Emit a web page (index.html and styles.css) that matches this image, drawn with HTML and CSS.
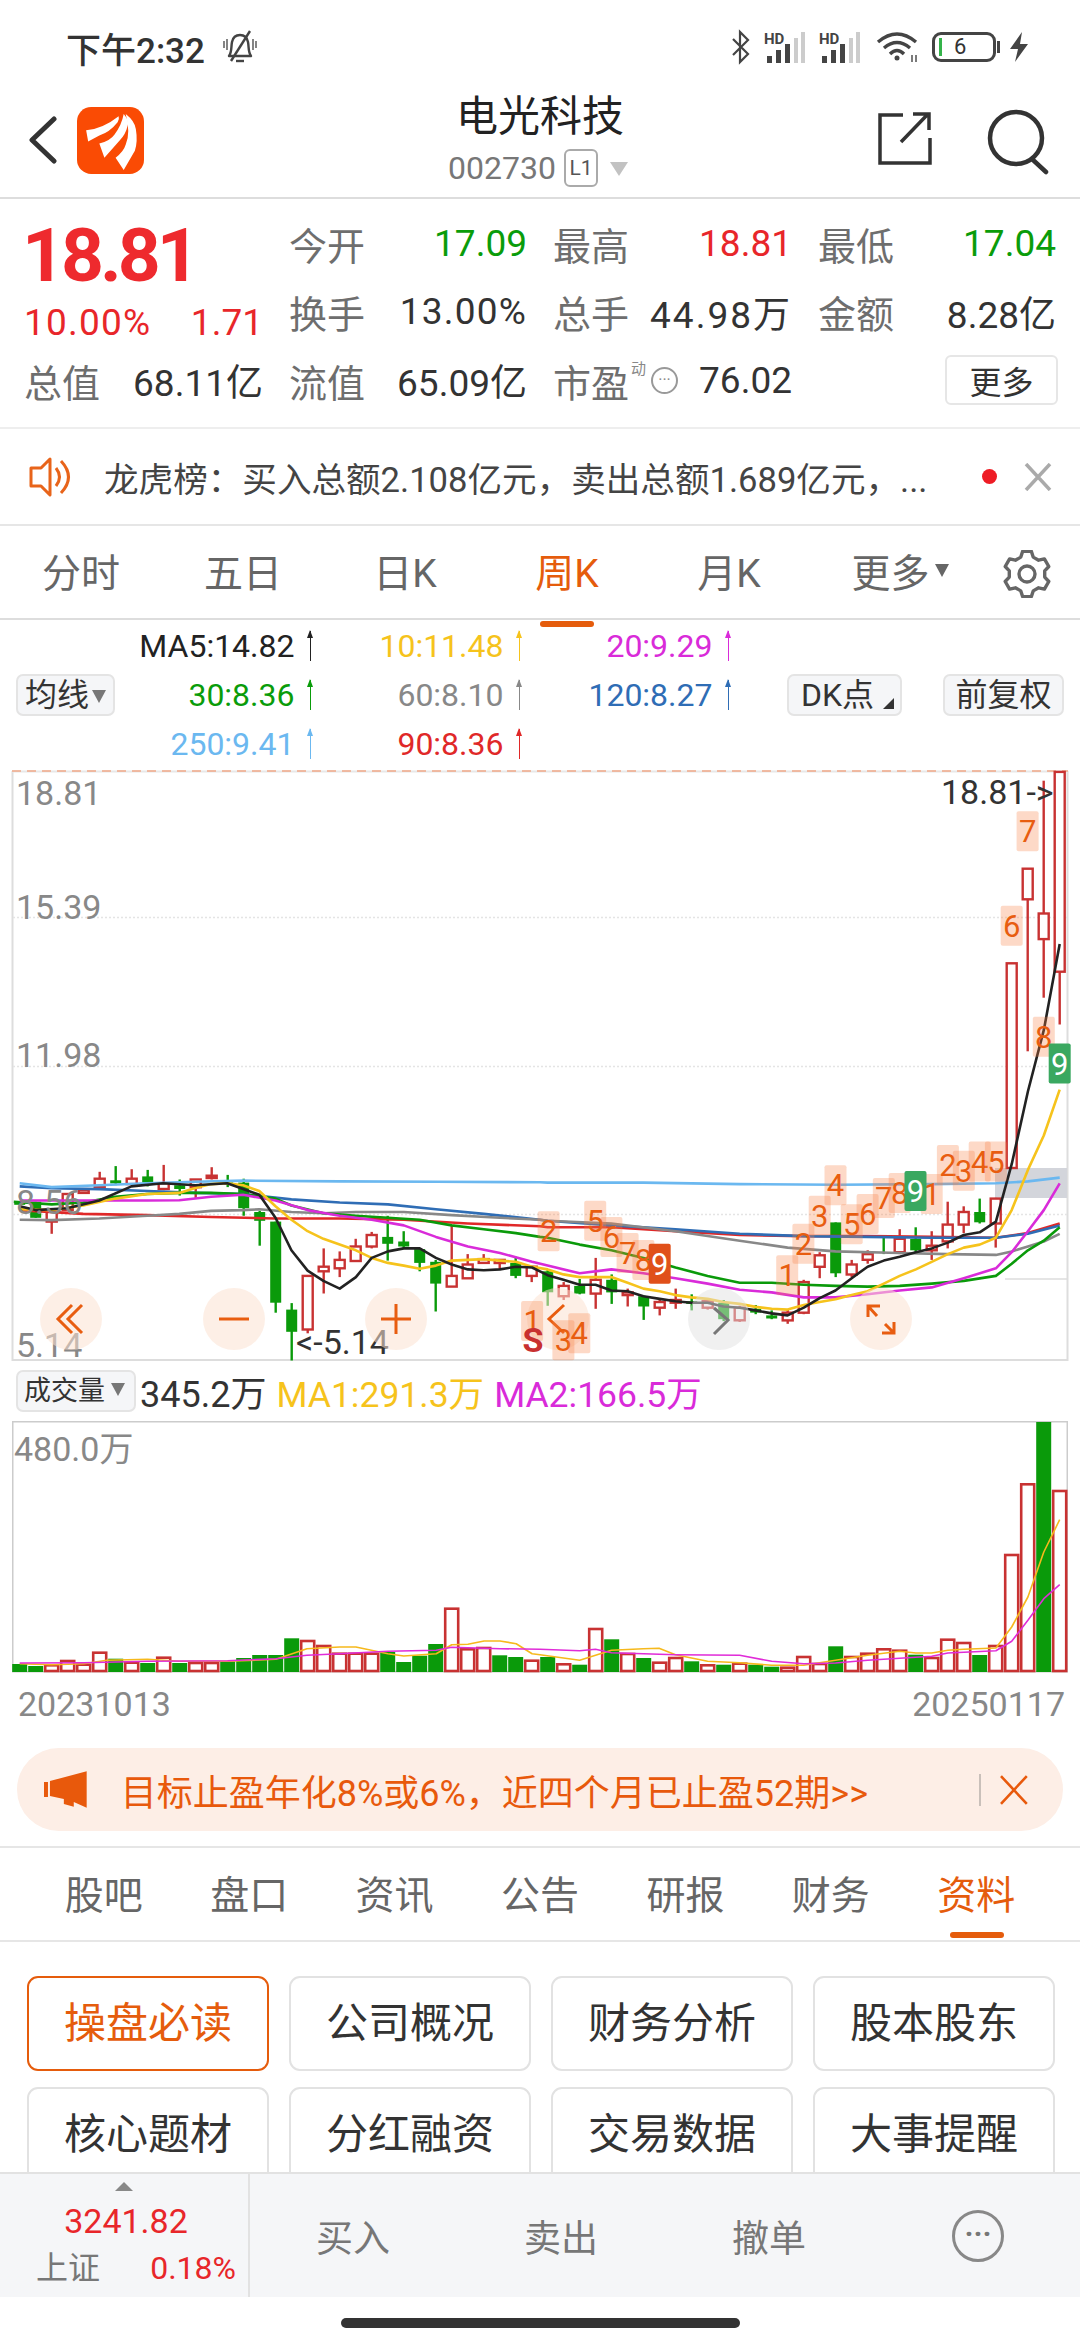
FILE: index.html
```html
<!DOCTYPE html>
<html lang="en">

<head>
  <meta charset="UTF-8">
  <meta name="viewport" content="width=device-width, initial-scale=1.0">
  <title>电光科技</title>
  <link rel="stylesheet" href="styles.css">
</head>

<body>

  <!-- Status bar -->
  <div class="status-bar">
    <div class="status-left">
      <span>下午2:32</span>
      <svg class="bell" width="36" height="34" viewBox="0 0 36 34" fill="none" stroke="#444" stroke-width="2.4">
        <path d="M7 26 C10 22 9 17 10 12 C11 7 14 5 18 5 C22 5 25 7 26 12 C27 17 26 22 29 26 Z" stroke-linejoin="round" />
        <path d="M14 31 H22" />
        <path d="M28 1 L9 31" />
        <path d="M2 11 V18 M5 9 V20 M31 9 V20 M34 11 V18" stroke-width="1.3" />
      </svg>
    </div>
    <div class="status-right">
      <svg width="20" height="36" viewBox="0 0 20 36" fill="none" stroke="#444" stroke-width="2.2">
        <path d="M2 10 L17 25 L9 33 V3 L17 11 L2 26" />
      </svg>
      <svg class="signal" width="42" height="32" viewBox="0 0 42 32">
        <text x="0" y="13" class="hd">HD</text>
        <rect x="3" y="25" width="5" height="7" fill="#444" />
        <rect x="12" y="19" width="5" height="13" fill="#444" />
        <rect x="21" y="13" width="5" height="19" fill="#444" />
        <rect x="30" y="7" width="4" height="25" fill="#ccc" />
        <rect x="37" y="1" width="4" height="31" fill="#ccc" />
      </svg>
      <svg class="signal" width="42" height="32" viewBox="0 0 42 32">
        <text x="0" y="13" class="hd">HD</text>
        <rect x="3" y="25" width="5" height="7" fill="#444" />
        <rect x="12" y="19" width="5" height="13" fill="#444" />
        <rect x="21" y="13" width="5" height="19" fill="#444" />
        <rect x="30" y="7" width="4" height="25" fill="#ccc" />
        <rect x="37" y="1" width="4" height="31" fill="#ccc" />
      </svg>
      <svg class="wifi" width="44" height="32" viewBox="0 0 44 32" fill="none" stroke="#444" stroke-width="3.4">
        <path d="M2 11 Q21 -5 40 11" />
        <path d="M8 17 Q21 6 34 17" />
        <path d="M14 23 Q21 16 28 23" />
        <circle cx="21" cy="27" r="2.5" fill="#444" stroke="none" />
        <path d="M36 24 V31 M40 24 V31" stroke-width="1.4" />
      </svg>
      <div class="battery">
        <span class="battery-level"></span>
        <span class="battery-num">6</span>
      </div>
      <svg class="bolt" width="22" height="32" viewBox="0 0 22 32">
        <path d="M14 1 L2 18 H10 L7 31 L20 13 H12 Z" fill="#444" />
      </svg>
    </div>
  </div>

  <!-- Title -->
  <div class="header">
    <div class="header-left">
      <svg width="30" height="48" viewBox="0 0 30 48" fill="none" stroke="#333" stroke-width="5" stroke-linecap="round" stroke-linejoin="round">
        <path d="M26 3 L4 24 L26 45" />
      </svg>
      <svg class="logo" width="67" height="67" viewBox="0 0 66 66">
        <rect width="66" height="66" rx="14" fill="#fa4b04" />
        <path d="M9 23 Q26 21 41 9 Q42 12 40 15 Q32 25 22 28 L11 34 Z" fill="#fff" />
        <path d="M46 7 Q52 14 50 18 Q48 27 42 33 L27 50 L22 36 Q33 33 37 27 Q44 18 46 7 Z" fill="#fff" />
        <path d="M48 7 Q57 14 58 22 Q60 34 57 43 L46 62 L38 50 Q46 44 48 37 Q53 26 48 7 Z" fill="#fff" />
      </svg>
    </div>
    <div class="header-center">
      <div class="stock-name">电光科技</div>
      <div class="stock-code">
        <span>002730</span>
        <span class="l1">L1</span>
        <span class="code-arrow"></span>
      </div>
    </div>
    <div class="header-right">
      <svg width="54" height="54" viewBox="0 0 54 54" fill="none" stroke="#333" stroke-width="3.5">
        <path d="M25 4 H2 V52 H52 V27" />
        <path d="M23 31 L50 3 M35 3 H51 V19" />
      </svg>
      <svg width="66" height="66" viewBox="0 0 66 66" fill="none" stroke="#333" stroke-width="4.5" stroke-linecap="round">
        <circle cx="30" cy="29" r="26" />
        <path d="M46 50 L60 63" />
      </svg>
    </div>
  </div>

  <!-- Quote -->
  <div class="quote">
    <div class="quote-main">
      <div class="last-price">18.81</div>
      <div class="change-row">
        <span class="pct">10.00%</span>
        <span>1.71</span>
      </div>
      <div class="quote-cell">
        <span class="q-label">总值</span>
        <span>68.11亿</span>
      </div>
    </div>
    <div class="quote-grid">
      <div class="quote-cell"><span class="q-label">今开</span><span class="green">17.09</span></div>
      <div class="quote-cell"><span class="q-label">最高</span><span class="red">18.81</span></div>
      <div class="quote-cell"><span class="q-label">最低</span><span class="green">17.04</span></div>
      <div class="quote-cell"><span class="q-label">换手</span><span class="pct">13.00%</span></div>
      <div class="quote-cell"><span class="q-label">总手</span><span class="wide">44.98万</span></div>
      <div class="quote-cell"><span class="q-label">金额</span><span>8.28亿</span></div>
      <div class="quote-cell"><span class="q-label">流值</span><span>65.09亿</span></div>
      <div class="quote-cell">
        <span class="pe-label">
          <span class="q-label">市盈</span>
          <span class="pe-sup">动</span>
          <span class="pe-dots">···</span>
        </span>
        <span>76.02</span>
      </div>
      <div class="quote-cell quote-more"><button class="more-btn">更多</button></div>
    </div>
  </div>

  <!-- Notice -->
  <div class="notice">
    <svg width="46" height="40" viewBox="0 0 46 40" fill="none" stroke="#e8641a" stroke-width="3" stroke-linejoin="round">
      <path d="M13 11 H3 V29 H13 L22 38 V2 Z" />
      <path d="M28 11 Q35 20 28 29" />
      <path d="M33 4 Q48 20 33 36" />
    </svg>
    <span class="notice-text">龙虎榜：买入总额2.108亿元，卖出总额1.689亿元，...</span>
    <span class="notice-dot"></span>
    <svg width="28" height="28" viewBox="0 0 28 28" stroke="#aaa" stroke-width="3.5">
      <path d="M2 1 L26 27 M26 1 L2 27" />
    </svg>
  </div>

  <!-- Period tabs -->
  <div class="period-tabs">
    <span class="period">分时</span>
    <span class="period">五日</span>
    <span class="period">日K</span>
    <span class="period active">周K</span>
    <span class="period">月K</span>
    <span class="period period-more">更多<span class="mini-down"></span></span>
    <svg class="gear" width="48" height="48" viewBox="0 0 48 48" fill="none" stroke="#666" stroke-width="3.4" stroke-linejoin="round">
      <path d="M17.8 7.1 L19.6 1.4 L28.4 1.4 L30.2 7.1 L35.6 10.2 L41.4 8.9 L45.8 16.5 L41.7 20.9 L41.7 27.1 L45.8 31.5 L41.4 39.1 L35.6 37.8 L30.2 40.9 L28.4 46.6 L19.6 46.6 L17.8 40.9 L12.4 37.8 L6.6 39.1 L2.2 31.5 L6.3 27.1 L6.3 20.9 L2.2 16.5 L6.6 8.9 L12.4 10.2 Z" />
      <circle cx="24" cy="24" r="8" />
    </svg>
  </div>

  <!-- MA legend -->
  <div class="legend-bar">
    <button class="chip chip-ma">均线<span class="mini-down dark"></span></button>
    <div class="legend">
      <span class="ma c-black">MA5:14.82<i class="up"></i></span>
      <span class="ma c-yellow">10:11.48<i class="up"></i></span>
      <span class="ma c-magenta">20:9.29<i class="up"></i></span>
      <span class="ma c-green">30:8.36<i class="up"></i></span>
      <span class="ma c-gray">60:8.10<i class="up"></i></span>
      <span class="ma c-blue">120:8.27<i class="up"></i></span>
      <span class="ma c-sky">250:9.41<i class="up"></i></span>
      <span class="ma c-red">90:8.36<i class="up"></i></span>
    </div>
    <button class="chip chip-dk">DK点<span class="corner"></span></button>
    <button class="chip chip-fq">前复权</button>
  </div>

  <!-- Candles, filled by chart.js -->
  <svg id="kline" class="kline" width="1080" height="598" viewBox="0 0 1080 598"></svg>

  <!-- Volume -->
  <div class="vol-bar">
    <button class="chip chip-vol">成交量<span class="mini-down dark"></span></button>
    <span class="vol-now">345.2万</span>
    <span class="vol-ma c-yellow">MA1:291.3万</span>
    <span class="vol-ma c-magenta">MA2:166.5万</span>
  </div>
  <svg id="volume" class="volume" width="1080" height="254" viewBox="0 0 1080 254"></svg>
  <div class="dates">
    <span>20231013</span>
    <span>20250117</span>
  </div>

  <!-- Banner -->
  <div class="banner-wrap">
    <div class="banner">
      <svg width="44" height="38" viewBox="0 0 44 38">
        <path d="M0 11 H4 V26 H0 Z M6 10 L43 0 V37 L30 31 L30 36 L20 33 L20 28 L6 25 Z" fill="#e8590c" />
      </svg>
      <span class="banner-text">目标止盈年化8%或6%，近四个月已止盈52期&gt;&gt;</span>
      <span class="banner-line"></span>
      <svg width="30" height="30" viewBox="0 0 30 30" stroke="#e8590c" stroke-width="2.6">
        <path d="M2 1 L28 29 M28 1 L2 29" />
      </svg>
    </div>
  </div>

  <!-- Info tabs -->
  <div class="info-tabs">
    <span class="info-tab">股吧</span>
    <span class="info-tab">盘口</span>
    <span class="info-tab">资讯</span>
    <span class="info-tab">公告</span>
    <span class="info-tab">研报</span>
    <span class="info-tab">财务</span>
    <span class="info-tab active">资料</span>
  </div>

  <div class="info-grid">
    <span class="info-btn active">操盘必读</span>
    <span class="info-btn">公司概况</span>
    <span class="info-btn">财务分析</span>
    <span class="info-btn">股本股东</span>
    <span class="info-btn">核心题材</span>
    <span class="info-btn">分红融资</span>
    <span class="info-btn">交易数据</span>
    <span class="info-btn">大事提醒</span>
  </div>

  <!-- Bottom bar -->
  <div class="bottom-bar">
    <div class="index-box">
      <span class="up-tri"></span>
      <div class="index-value">3241.82</div>
      <div class="index-row">
        <span class="index-name">上证</span>
        <span class="index-pct">0.18%</span>
      </div>
    </div>
    <div class="trade-actions">
      <span class="trade">买入</span>
      <span class="trade">卖出</span>
      <span class="trade">撤单</span>
      <span class="trade-more">···</span>
    </div>
  </div>

  <div class="home-area"><span class="home-pill"></span></div>

  <script src="chart.js"></script>

</body>

</html>
```

FILE: styles.css
```css
* {
  box-sizing: border-box;
}

body {
  margin: 0;
  width: 1080px;
  height: 2340px;
  overflow: hidden;
  background-color: #fff;
  color: #333;
  font-family: Roboto, "Noto Sans CJK SC", sans-serif;
}

button {
  font-family: inherit;
  padding: 0;
}

/* Status bar */
.status-bar {
  height: 94px;
  padding: 0 50px 0 66px;
  display: flex;
  justify-content: space-between;
  align-items: center;
  font-size: 35px;
  font-weight: 500;
  color: #333;
}

.status-left {
  display: flex;
  align-items: center;
  gap: 17px;
}

.status-right {
  display: flex;
  align-items: center;
  gap: 12px;
}

.signal {
  margin-left: 1px;
}

.hd {
  font-size: 15px;
  font-weight: 700;
  fill: #444;
}

.wifi {
  margin-left: 3px;
}

.battery {
  width: 64px;
  height: 30px;
  border: 3px solid #444;
  border-radius: 9px;
  display: flex;
  align-items: center;
  position: relative;
  padding-left: 4px;
}

.battery::after {
  content: "";
  position: absolute;
  right: -7px;
  top: 6px;
  width: 3px;
  height: 12px;
  background-color: #444;
}

.battery-level {
  width: 3px;
  height: 18px;
  background-color: #34b34a;
}

.battery-num {
  font-size: 22px;
  font-weight: 400;
  margin-left: 12px;
  line-height: 1;
}

/* Title */
.header {
  height: 105px;
  border-bottom: 2px solid #ddd;
  display: grid;
  grid-template-columns: 1fr auto 1fr;
  position: relative;
}

.header-left {
  display: flex;
  align-items: center;
  gap: 19px;
  padding: 20px 0 0 28px;
  height: 72px;
}

.header-right {
  display: flex;
  justify-content: flex-end;
  gap: 54px;
  padding: 15px 28px 0 0;
  align-items: flex-start;
}

.header-right svg:first-child {
  margin-top: 2px;
}

.stock-name {
  font-size: 42px;
  line-height: 44px;
  margin-top: 1px;
  text-align: center;
  color: #222;
}

.stock-code {
  margin-top: 9px;
  display: flex;
  align-items: center;
  font-size: 32px;
  line-height: 40px;
  color: #777;
  margin-left: -4px;
}

.l1 {
  margin-left: 8px;
  width: 34px;
  height: 38px;
  border: 2px solid #aaa;
  border-radius: 6px;
  font-size: 21px;
  line-height: 34px;
  text-align: center;
  color: #555;
}

.code-arrow {
  margin-left: 12px;
  margin-top: 2px;
  border-left: 9px solid transparent;
  border-right: 9px solid transparent;
  border-top: 14px solid #c2c2c2;
}

/* Quote */
.quote {
  height: 230px;
  padding: 10px 24px 0 24px;
  border-bottom: 2px solid #eee;
  display: flex;
  gap: 26px;
  font-size: 37px;
  color: #333;
}

.quote-main {
  width: 239px;
  flex-shrink: 0;
}

.last-price {
  margin-top: 8px;
  margin-left: -2px;
  height: 76px;
  font-size: 75px;
  line-height: 76px;
  font-weight: 700;
  letter-spacing: -4px;
  color: #ee2a2e;
  white-space: nowrap;
}

.change-row {
  margin-top: 7px;
  height: 46px;
  line-height: 46px;
  display: flex;
  justify-content: space-between;
  color: #e8262a;
  font-size: 37px;
}

.quote-main .quote-cell {
  margin-top: 11px;
  height: 46px;
}

.quote-grid {
  display: grid;
  grid-template-columns: 238px 239px 238px;
  grid-auto-rows: 68.5px;
  column-gap: 26px;
}

.quote-cell {
  display: flex;
  justify-content: space-between;
  align-items: center;
  white-space: nowrap;
}

.pct {
  letter-spacing: 1.2px;
}

.wide {
  letter-spacing: 2px;
}

.q-label {
  font-size: 38px;
  color: #6e6e6e;
}

.green {
  color: #0a9c0a;
}

.red {
  color: #e8262a;
}

.pe-label {
  display: flex;
  align-items: center;
}

.pe-sup {
  font-size: 15px;
  color: #888;
  align-self: flex-start;
  line-height: 16px;
  margin: 8px 0 0 2px;
}

.pe-dots {
  width: 27px;
  height: 27px;
  margin-left: 5px;
  border: 2px solid #999;
  border-radius: 50%;
  font-size: 16px;
  line-height: 22px;
  text-align: center;
  color: #888;
}

.quote-more {
  justify-content: flex-end;
}

.more-btn {
  width: 113px;
  height: 50px;
  margin-right: -2px;
  background-color: #fff;
  border: 2px solid #e6e6e6;
  border-radius: 6px;
  font-size: 32px;
  color: #333;
}

/* Notice */
.notice {
  height: 97px;
  border-bottom: 2px solid #e6e6e6;
  padding: 0 28px;
  display: flex;
  align-items: center;
}

.notice-text {
  margin-left: 30px;
  width: 874px;
  font-size: 34.6px;
  color: #444;
  white-space: nowrap;
}

.notice-dot {
  margin-left: 4px;
  width: 15px;
  height: 15px;
  border-radius: 50%;
  background-color: #ee1c25;
}

.notice svg:last-child {
  margin-left: 27px;
}

/* Period tabs */
.period-tabs {
  height: 94px;
  border-bottom: 2px solid #ddd;
  padding-top: 4px;
  display: flex;
  align-items: center;
}

.period {
  width: 162px;
  text-align: center;
  font-size: 39px;
  color: #666;
  position: relative;
  line-height: 44px;
}

.period-more {
  left: 9px;
}

.period.active {
  color: #e55c0c;
}

.period.active::after {
  content: "";
  position: absolute;
  left: 54px;
  bottom: -31px;
  width: 54px;
  height: 6px;
  border-radius: 3px;
  background-color: #e55c0c;
}

.mini-down {
  display: inline-block;
  margin-left: 5px;
  vertical-align: 10px;
  border-left: 7px solid transparent;
  border-right: 7px solid transparent;
  border-top: 13px solid #666;
}

.mini-down.dark {
  margin-left: 3px;
  vertical-align: 3px;
  border-top-color: #777;
}

.gear {
  margin-left: 31px;
}

/* Legend */
.legend-bar {
  height: 150px;
  padding-left: 16px;
  display: flex;
  align-items: center;
}

.chip {
  height: 42px;
  background-color: #f5f6f8;
  border: 2px solid #e4e4e4;
  border-radius: 7px;
  font-size: 32px;
  color: #333;
  white-space: nowrap;
  line-height: 36px;
}

.chip-ma {
  width: 99px;
}

.chip-dk {
  width: 115px;
  margin-left: 49px;
  padding-left: 12px;
  text-align: left;
  position: relative;
}

.corner {
  position: absolute;
  right: 6px;
  bottom: 5px;
  border-left: 11px solid transparent;
  border-bottom: 11px solid #333;
}

.chip-fq {
  width: 121px;
  margin-left: 41px;
}

.legend {
  display: grid;
  grid-template-columns: 205px 209px 209px;
  grid-auto-rows: 49px;
  font-size: 32px;
}

.ma {
  display: flex;
  justify-content: flex-end;
  align-items: center;
  white-space: nowrap;
}

.up {
  margin-left: 15px;
  margin-right: 9px;
  width: 1.5px;
  height: 30px;
  background-color: currentColor;
  position: relative;
}

.up::before {
  content: "";
  position: absolute;
  left: -3px;
  top: -1px;
  border-left: 3.7px solid transparent;
  border-right: 3.7px solid transparent;
  border-bottom: 8px solid currentColor;
}

.c-black { color: #222; }
.c-yellow { color: #f6c31c; }
.c-magenta { color: #d92bd9; }
.c-green { color: #0a9c0a; }
.c-gray { color: #888; }
.c-blue { color: #2f6db5; }
.c-sky { color: #6bb8f0; }
.c-red { color: #e02828; }

/* Charts */
.kline,
.volume {
  display: block;
}

/* the extra height only keeps the 5.14 label's box inside the svg */
.kline {
  margin-bottom: -6px;
}

.axis-text {
  font-size: 34px;
  fill: #888;
}

.price-tag {
  font-size: 34px;
  fill: #333;
}

.mark-text {
  font-size: 31px;
  fill: #e85d10;
  text-anchor: middle;
}

.mark-text.solid {
  fill: #fff;
}

.sell-s {
  font-size: 34px;
  font-weight: 700;
  fill: #c83030;
  text-anchor: middle;
}

.vol-bar {
  height: 58px;
  padding-left: 16px;
  display: flex;
  align-items: center;
  gap: 10px;
  font-size: 36px;
  white-space: nowrap;
}

.chip-vol {
  width: 120px;
  font-size: 27px;
  padding-left: 6px;
  text-align: left;
}

.chip-vol .mini-down {
  margin-left: 6px;
  vertical-align: 4px;
}

.vol-now {
  margin-left: -6px;
  color: #333;
}

.vol-ma {
  font-size: 35.5px;
}

.dates {
  height: 60px;
  padding: 0 15px 0 18px;
  display: flex;
  justify-content: space-between;
  align-items: center;
  font-size: 34px;
  color: #888;
}

/* Banner */
.banner-wrap {
  height: 114px;
  padding: 14px 17px 0 17px;
  border-bottom: 2px solid #e6e6e6;
}

.banner {
  height: 83px;
  padding: 0 34px 0 27px;
  border-radius: 42px;
  background-color: #fdeee6;
  display: flex;
  align-items: center;
}

.banner-text {
  margin-left: 33px;
  width: 865px;
  font-size: 36px;
  color: #e8590c;
  white-space: nowrap;
}

.banner-line {
  width: 2px;
  height: 32px;
  background-color: #c9c0ba;
  margin-right: 18px;
}

/* Info tabs */
.info-tabs {
  height: 94px;
  padding: 4px 31px 0 31px;
  border-bottom: 2px solid #e6e6e6;
  display: flex;
  align-items: center;
}

.info-tab {
  width: 146px;
  text-align: center;
  font-size: 39px;
  line-height: 44px;
  color: #666;
  position: relative;
}

.info-tab.active {
  color: #e55c0c;
}

.info-tab.active::after {
  content: "";
  position: absolute;
  left: 46px;
  bottom: -20px;
  width: 54px;
  height: 6px;
  border-radius: 3px;
  background-color: #e55c0c;
}

.info-grid {
  height: 230px;
  padding: 34px 27px 0 27px;
  display: grid;
  grid-template-columns: repeat(4, 242px);
  grid-auto-rows: 95px;
  column-gap: 20px;
  row-gap: 16px;
  overflow: hidden;
}

.info-btn {
  border: 2px solid #e2e2e2;
  border-radius: 11px;
  font-size: 42px;
  line-height: 91px;
  text-align: center;
  color: #333;
}

.info-btn.active {
  border-color: #e55c0c;
  color: #e55c0c;
}

/* Bottom bar */
.bottom-bar {
  height: 125px;
  border-top: 2px solid #e2e2e2;
  background-color: #f5f6f8;
  display: flex;
}

.index-box {
  width: 250px;
  border-right: 2px solid #e2e2e2;
  padding: 8px 12px 0 36px;
  position: relative;
}

.up-tri {
  position: absolute;
  left: 115px;
  top: 8px;
  border-left: 9px solid transparent;
  border-right: 9px solid transparent;
  border-bottom: 9px solid #888;
}

.index-value {
  margin-top: 18px;
  padding-right: 20px;
  text-align: center;
  font-size: 34px;
  line-height: 42px;
  color: #e8262a;
}

.index-row {
  margin-top: 4px;
  display: flex;
  justify-content: space-between;
  line-height: 44px;
}

.index-name {
  font-size: 32px;
  color: #777;
}

.index-pct {
  font-size: 32px;
  color: #e8262a;
}

.trade-actions {
  flex: 1;
  display: flex;
  align-items: center;
}

.trade {
  width: 208px;
  text-align: center;
  font-size: 37px;
  color: #777;
}

.trade:first-child {
  margin-left: -1px;
}

.trade-more {
  margin-left: 79px;
  width: 52px;
  height: 52px;
  border: 3px solid #888;
  border-radius: 50%;
  text-align: center;
  font-size: 30px;
  font-weight: 700;
  line-height: 42px;
  color: #777;
}

.home-area {
  height: 44px;
  padding-top: 21px;
  display: flex;
  justify-content: center;
}

.home-pill {
  width: 399px;
  height: 10px;
  border-radius: 5px;
  background-color: #333;
}
```

FILE: chart.js
```js
// Measured off the screenshot: x units are 2.9 per px, y units 2.613 per px in the
// candle chart and 3 per px in the volume chart. Right half x values start at 1566.
var RIGHT = 1566;
var UP = '#c83232';
var DOWN = '#0a9a0a';

function sx(v) {
  return (v / 2.9).toFixed(1);
}

function sy(v) {
  return (v / 2.613).toFixed(1);
}

function vy(v) {
  return (v / 3 - 48).toFixed(1);
}

function slotX(i) {
  return 57 + i * 46.4;
}

// type, body top, body bottom, wick top, wick bottom
var candles = [
  ['g', 1130, 1136, 1130, 1136], ['g', 1128, 1170, 1128, 1170], ['r', 1150, 1180, 1150, 1212],
  ['r', 1108, 1150, 1108, 1150], ['r', 1098, 1105, 1098, 1105], ['r', 1068, 1090, 1050, 1095],
  ['g', 1072, 1080, 1035, 1085], ['r', 1068, 1082, 1043, 1085], ['g', 1062, 1078, 1045, 1088],
  ['r', 1080, 1095, 1032, 1098], ['g', 1085, 1095, 1070, 1112], ['r', 1070, 1090, 1070, 1118],
  ['r', 1060, 1066, 1038, 1070], ['g', 1072, 1078, 1058, 1090], ['g', 1078, 1145, 1068, 1165],
  ['g', 1155, 1178, 1152, 1243], ['g', 1180, 1392, 1180, 1418], ['g', 1410, 1468, 1393, 1543],
  ['r', 1322, 1462, 1322, 1472], ['r', 1298, 1310, 1250, 1368], ['r', 1280, 1302, 1258, 1325],
  ['r', 1245, 1283, 1225, 1285], ['r', 1215, 1245, 1207, 1250], ['g', 1220, 1238, 1165, 1282],
  ['g', 1232, 1245, 1205, 1250], ['g', 1252, 1288, 1250, 1310], ['g', 1285, 1342, 1280, 1415],
  ['r', 1322, 1350, 1190, 1350], ['r', 1292, 1328, 1265, 1328], ['r', 1278, 1288, 1265, 1290],
  ['r', 1280, 1288, 1278, 1305], ['g', 1288, 1322, 1272, 1328], ['r', 1298, 1322, 1296, 1338],
  ['g', 1310, 1365, 1305, 1400], ['r', 1348, 1375, 1338, 1385], ['g', 1348, 1368, 1330, 1370],
  ['r', 1332, 1368, 1275, 1408], ['g', 1332, 1365, 1318, 1395], ['r', 1365, 1372, 1355, 1402],
  ['g', 1375, 1402, 1373, 1437], ['r', 1390, 1405, 1385, 1425], ['r', 1385, 1392, 1355, 1408],
  ['g', 1388, 1395, 1370, 1412], ['r', 1388, 1405, 1380, 1410], ['g', 1392, 1435, 1385, 1440],
  ['r', 1405, 1438, 1400, 1442], ['g', 1408, 1418, 1398, 1422], ['g', 1425, 1433, 1412, 1435],
  ['r', 1418, 1438, 1410, 1447], ['r', 1338, 1418, 1332, 1422], ['r', 1268, 1298, 1260, 1328],
  ['g', 1182, 1315, 1182, 1325], ['r', 1292, 1318, 1280, 1325], ['r', 1265, 1280, 1255, 1290],
  ['g', 1218, 1222, 1215, 1265], ['r', 1225, 1260, 1200, 1265], ['g', 1225, 1255, 1195, 1260],
  ['r', 1243, 1255, 1205, 1280], ['r', 1188, 1232, 1128, 1250], ['r', 1155, 1188, 1140, 1210],
  ['g', 1155, 1182, 1120, 1185], ['r', 1120, 1185, 1118, 1248], ['r', 505, 1040, 505, 1040],
  ['r', 258, 338, 258, 735], ['r', 375, 442, 28, 595], ['r', 5, 527, 5, 665]
];

// left part, then right part with x measured from RIGHT
var lines = [
  { color: '#e02828', left: [57, 1150, 241, 1160, 427, 1163, 612, 1168, 799, 1172, 985, 1172, 1171, 1175, 1357, 1185, 1566, 1192],
    right: [22, 1195, 207, 1195, 393, 1205, 579, 1215, 765, 1218, 950, 1218, 1136, 1220, 1322, 1222, 1415, 1210, 1507, 1185] },
  { color: '#2f6db5', left: [57, 1088, 150, 1093, 288, 1095, 427, 1100, 566, 1105, 705, 1108, 845, 1122, 985, 1130, 1125, 1135, 1264, 1148, 1403, 1160, 1566, 1175],
    right: [22, 1178, 207, 1190, 393, 1200, 579, 1212, 765, 1218, 950, 1220, 1136, 1222, 1322, 1222, 1415, 1212, 1507, 1190] },
  { color: '#888', left: [57, 1175, 150, 1176, 288, 1172, 427, 1165, 520, 1160, 612, 1152, 705, 1150, 752, 1148, 845, 1155, 938, 1158, 1032, 1155, 1171, 1155, 1310, 1163, 1450, 1170, 1566, 1175],
    right: [22, 1178, 207, 1185, 393, 1205, 579, 1230, 718, 1248, 857, 1258, 1043, 1262, 1183, 1265, 1322, 1267, 1368, 1258, 1415, 1245, 1461, 1232, 1507, 1212] },
  { color: '#0a9a0a', left: [40, 1128, 150, 1135, 241, 1130, 334, 1115, 427, 1108, 520, 1105, 612, 1105, 705, 1108, 799, 1120, 845, 1138, 938, 1158, 1032, 1165, 1125, 1170, 1217, 1175, 1310, 1190, 1403, 1200, 1496, 1210, 1566, 1220],
    right: [22, 1222, 115, 1240, 207, 1255, 300, 1275, 393, 1300, 486, 1322, 579, 1340, 672, 1340, 765, 1345, 857, 1348, 950, 1350, 1043, 1348, 1136, 1342, 1229, 1335, 1322, 1322, 1368, 1290, 1415, 1255, 1461, 1230, 1507, 1195] },
  { color: '#d92bd9', left: [57, 1125, 150, 1125, 241, 1125, 334, 1125, 427, 1125, 520, 1124, 612, 1115, 705, 1110, 799, 1125, 892, 1150, 985, 1165, 1078, 1175, 1171, 1190, 1264, 1220, 1357, 1245, 1450, 1262, 1543, 1285],
    right: [22, 1295, 115, 1315, 207, 1305, 300, 1315, 393, 1328, 486, 1342, 579, 1358, 672, 1365, 765, 1378, 857, 1378, 950, 1370, 1043, 1360, 1136, 1352, 1229, 1328, 1322, 1302, 1368, 1260, 1415, 1205, 1461, 1150, 1507, 1080] },
  { color: '#6bb8f0', left: [57, 1080, 150, 1090, 288, 1085, 427, 1080, 566, 1076, 705, 1073, 985, 1075, 1264, 1076, 1566, 1077],
    right: [22, 1078, 300, 1078, 579, 1082, 857, 1084, 1136, 1082, 1322, 1080, 1415, 1075, 1507, 1065] },
  { color: '#f6c31c', left: [57, 1148, 150, 1150, 241, 1138, 334, 1120, 427, 1108, 520, 1105, 566, 1092, 612, 1082, 659, 1080, 705, 1085, 752, 1100, 799, 1140, 845, 1175, 892, 1205, 938, 1225, 1032, 1255, 1078, 1275, 1125, 1288, 1171, 1295, 1217, 1303, 1264, 1295, 1310, 1282, 1357, 1280, 1403, 1278, 1450, 1282, 1496, 1285, 1543, 1298],
    right: [22, 1305, 68, 1318, 115, 1325, 161, 1325, 207, 1325, 254, 1340, 300, 1355, 347, 1362, 393, 1372, 439, 1378, 486, 1382, 532, 1390, 579, 1395, 625, 1403, 672, 1408, 718, 1410, 765, 1398, 811, 1390, 857, 1383, 904, 1372, 950, 1362, 997, 1342, 1043, 1322, 1090, 1305, 1136, 1285, 1183, 1265, 1229, 1248, 1275, 1240, 1322, 1222, 1368, 1150, 1415, 1045, 1461, 955, 1507, 835] },
  { color: '#222', left: [57, 1140, 103, 1150, 195, 1145, 288, 1125, 381, 1088, 473, 1080, 566, 1085, 659, 1080, 752, 1110, 799, 1170, 845, 1255, 892, 1308, 938, 1335, 985, 1355, 1032, 1325, 1078, 1275, 1125, 1258, 1171, 1250, 1217, 1250, 1264, 1275, 1310, 1292, 1357, 1305, 1403, 1307, 1450, 1305, 1496, 1298, 1543, 1300],
    right: [22, 1320, 68, 1332, 115, 1345, 161, 1345, 207, 1360, 254, 1362, 300, 1375, 347, 1382, 393, 1388, 439, 1392, 486, 1392, 532, 1402, 579, 1405, 625, 1412, 672, 1420, 718, 1425, 765, 1405, 811, 1380, 857, 1360, 904, 1328, 950, 1298, 997, 1282, 1043, 1272, 1090, 1260, 1136, 1250, 1183, 1235, 1229, 1215, 1275, 1208, 1322, 1180, 1368, 1030, 1415, 840, 1461, 680, 1507, 455] }
];

// digit, x, y (centre of the tag), tag colour
var marks = [
  ['1', 1543, 1440], ['2', 1591, 1205], ['5', 1726, 1178], ['6', 1773, 1220], ['7', 1820, 1262], ['8', 1866, 1280],
  ['9', 1913, 1290, 'orange'], ['3', 1634, 1490], ['4', 1680, 1472], ['1', 2283, 1320], ['2', 2330, 1238],
  ['3', 2377, 1165], ['4', 2423, 1085], ['5', 2470, 1187], ['6', 2516, 1160], ['7', 2563, 1118], ['8', 2609, 1105],
  ['1', 2702, 1108], ['9', 2655, 1100, 'green'], ['2', 2749, 1032], ['3', 2795, 1047], ['4', 2841, 1023], ['5', 2888, 1023],
  ['6', 2934, 407], ['7', 2980, 160], ['8', 3027, 697], ['9', 3073, 767, 'green']
];

function polyline(points, offset, toY) {
  var out = '';
  for (var i = 0; i < points.length; i += 2) {
    out += sx(points[i] + offset) + ',' + toY(points[i + 1]) + ' ';
  }
  return out;
}

function drawLine(line, toY, width) {
  var pts = polyline(line.left, 0, toY) + polyline(line.right, RIGHT, toY);
  return '<polyline points="' + pts + '" fill="none" stroke="' + line.color +
    '" stroke-width="' + width + '" stroke-linejoin="round"/>';
}

function drawCandle(c, i) {
  var x = sx(slotX(i));
  var color = c[0] === 'r' ? UP : DOWN;
  var html = '<line x1="' + x + '" x2="' + x + '" y1="' + sy(c[3]) + '" y2="' + sy(c[4]) +
    '" stroke="' + color + '" stroke-width="2.4"/>';
  var w = c[0] === 'r' ? 10 : 11;
  var h = (c[2] - c[1]) / 2.613;
  html += '<rect x="' + (x - w / 2) + '" y="' + sy(c[1]) + '" width="' + w + '" height="' + h.toFixed(1) +
    '" fill="' + (c[0] === 'r' ? '#fff' : DOWN) + '"' + (c[0] === 'r' ? ' stroke="' + UP + '" stroke-width="2.4"' : '') + '/>';
  return html;
}

function drawMark(m) {
  var x = m[1] / 2.9;
  var y = m[2] / 2.613;
  var fills = { orange: '#e0501a', green: '#3aa860' };
  var fill = m[3] ? fills[m[3]] : 'rgba(248, 130, 70, 0.3)';
  return '<rect x="' + (x - 11).toFixed(1) + '" y="' + (y - 20).toFixed(1) + '" width="22" height="40" rx="2" fill="' + fill + '"/>' +
    '<text class="mark-text' + (m[3] ? ' solid' : '') + '" x="' + x.toFixed(1) + '" y="' + (y + 11).toFixed(1) + '">' + m[0] + '</text>';
}

function circle(x, fill) {
  return '<circle cx="' + x + '" cy="549" r="31" fill="' + fill + '"/>';
}

function drawControls() {
  var tint = 'rgba(252, 225, 210, 0.55)';
  var html = circle(71, tint) + circle(234, tint) + circle(396, tint) + circle(558, tint) +
    circle(719, 'rgba(225, 225, 225, 0.5)') + circle(881, tint);
  html += '<g fill="none" stroke="#e85d10" stroke-width="3">' +
    '<path d="M72 535 L58 549 L72 563 M82 535 L68 549 L82 563"/>' +
    '<path d="M219 549 H249"/>' +
    '<path d="M381 549 H411 M396 534 V564"/>' +
    '<path d="M564 535 L549 549 L564 563"/>' +
    '<path d="M868 536 L877 546 M885 554 L894 563 M868 547 V536 H880 M894 552 V563 H882"/></g>';
  html += '<path d="M714 564 L728 550 L714 538" fill="none" stroke="#777" stroke-width="3"/>';
  return html;
}

function drawKline() {
  var html = '<path d="M12.5 1 V590 H1067.5 V1" fill="none" stroke="#ddd" stroke-width="2"/>';
  html += '<path d="M12 1.5 H1068" stroke="#e8e8e8" stroke-width="2"/>';
  html += '<path d="M12 1 H1068" stroke="#f0a888" stroke-width="1.5" stroke-dasharray="9 6"/>';
  html += '<path d="M13 147.5 H1067 M13 296.5 H1067 M13 444.5 H1067" stroke="#e4e4e4" stroke-width="1.5" stroke-dasharray="2 2"/>';
  html += '<path d="M1005 509 H1067" stroke="#ddd" stroke-width="1.5"/>';
  html += '<rect x="995" y="398" width="72" height="30" fill="#d3d5db"/>';

  candles.forEach(function (c, i) {
    html += drawCandle(c, i);
  });
  lines.forEach(function (line) {
    html += drawLine(line, sy, 2.6);
  });

  html += '<text class="axis-text" x="16" y="35">18.81</text>';
  html += '<text class="axis-text" x="16" y="149">15.39</text>';
  html += '<text class="axis-text" x="16" y="297">11.98</text>';
  html += '<text class="axis-text" x="16" y="444">8.56</text>';
  html += '<text class="axis-text" x="16" y="587">5.14</text>';
  html += '<text class="price-tag" x="941" y="34">18.81-&gt;</text>';
  html += '<text class="price-tag" x="296" y="584">&lt;-5.14</text>';

  html += drawControls();
  marks.forEach(function (m) {
    html += drawMark(m);
  });
  html += '<text class="sell-s" x="533" y="582">S</text>';

  document.getElementById('kline').innerHTML = html;
}

// 1 for rising bars, top of bar
var bars = [
  [0, 876], [0, 882], [1, 880], [1, 867], [1, 878], [1, 842], [0, 860], [1, 872], [0, 873], [1, 857], [0, 873],
  [1, 873], [1, 873], [0, 868], [0, 858], [0, 849], [0, 849], [0, 799], [1, 807], [1, 822], [1, 845], [1, 845],
  [1, 845], [0, 840], [0, 870], [0, 851], [0, 816], [1, 710], [1, 832], [1, 828], [0, 850], [0, 855], [1, 866],
  [0, 855], [1, 877], [0, 878], [1, 771], [0, 802], [1, 846], [0, 858], [1, 872], [1, 858], [0, 868], [1, 880],
  [0, 878], [1, 875], [0, 878], [0, 884], [1, 887], [1, 855], [1, 876], [0, 823], [1, 855], [1, 845], [1, 832],
  [1, 836], [0, 848], [1, 858], [1, 803], [1, 813], [0, 849], [1, 822], [1, 549], [1, 337], [0, 150], [1, 357]
];

var volLines = [
  { color: '#f6b91c', left: [57, 875, 150, 878, 243, 875, 310, 865, 428, 862, 520, 868, 660, 868, 800, 862, 890, 830, 985, 825, 1032, 825, 1125, 845, 1171, 852, 1265, 845, 1310, 818, 1357, 817, 1404, 807, 1450, 807, 1497, 815, 1543, 845],
    right: [0, 848, 115, 865, 207, 835, 300, 830, 345, 829, 393, 848, 486, 868, 579, 872, 672, 880, 765, 880, 857, 865, 950, 850, 1043, 838, 1090, 843, 1136, 843, 1183, 835, 1229, 832, 1322, 828, 1368, 765, 1415, 675, 1461, 540, 1507, 443] },
  { color: '#e02cd8', left: [57, 873, 243, 872, 428, 868, 660, 866, 800, 860, 890, 850, 985, 845, 1125, 838, 1265, 835, 1310, 826, 1450, 830, 1566, 832],
    right: [0, 832, 115, 836, 161, 832, 207, 842, 393, 848, 579, 850, 672, 868, 765, 875, 857, 873, 950, 865, 1136, 853, 1183, 843, 1322, 836, 1368, 808, 1415, 745, 1461, 680, 1507, 638] }
];

function drawVolume() {
  var html = '<rect x="12.75" y="1.75" width="1054.5" height="250" fill="#fff" stroke="#ccc" stroke-width="1.5"/>';
  bars.forEach(function (b, i) {
    var x = slotX(i) / 2.9;
    var top = b[1] / 3 - 48;
    var bottom = 897 / 3 - 48;
    if (b[0]) {
      html += '<rect x="' + (x - 6.5).toFixed(1) + '" y="' + top.toFixed(1) + '" width="13" height="' + (bottom - top).toFixed(1) +
        '" fill="#fff" stroke="' + UP + '" stroke-width="2.6"/>';
    } else {
      html += '<rect x="' + (x - 7.5).toFixed(1) + '" y="' + top.toFixed(1) + '" width="15" height="' + (bottom - top + 1).toFixed(1) +
        '" fill="' + DOWN + '"/>';
    }
  });
  volLines.forEach(function (line) {
    html += drawLine(line, vy, 1.6);
  });
  html += '<text class="axis-text" x="14" y="41">480.0万</text>';
  document.getElementById('volume').innerHTML = html;
}

drawKline();
drawVolume();
```
